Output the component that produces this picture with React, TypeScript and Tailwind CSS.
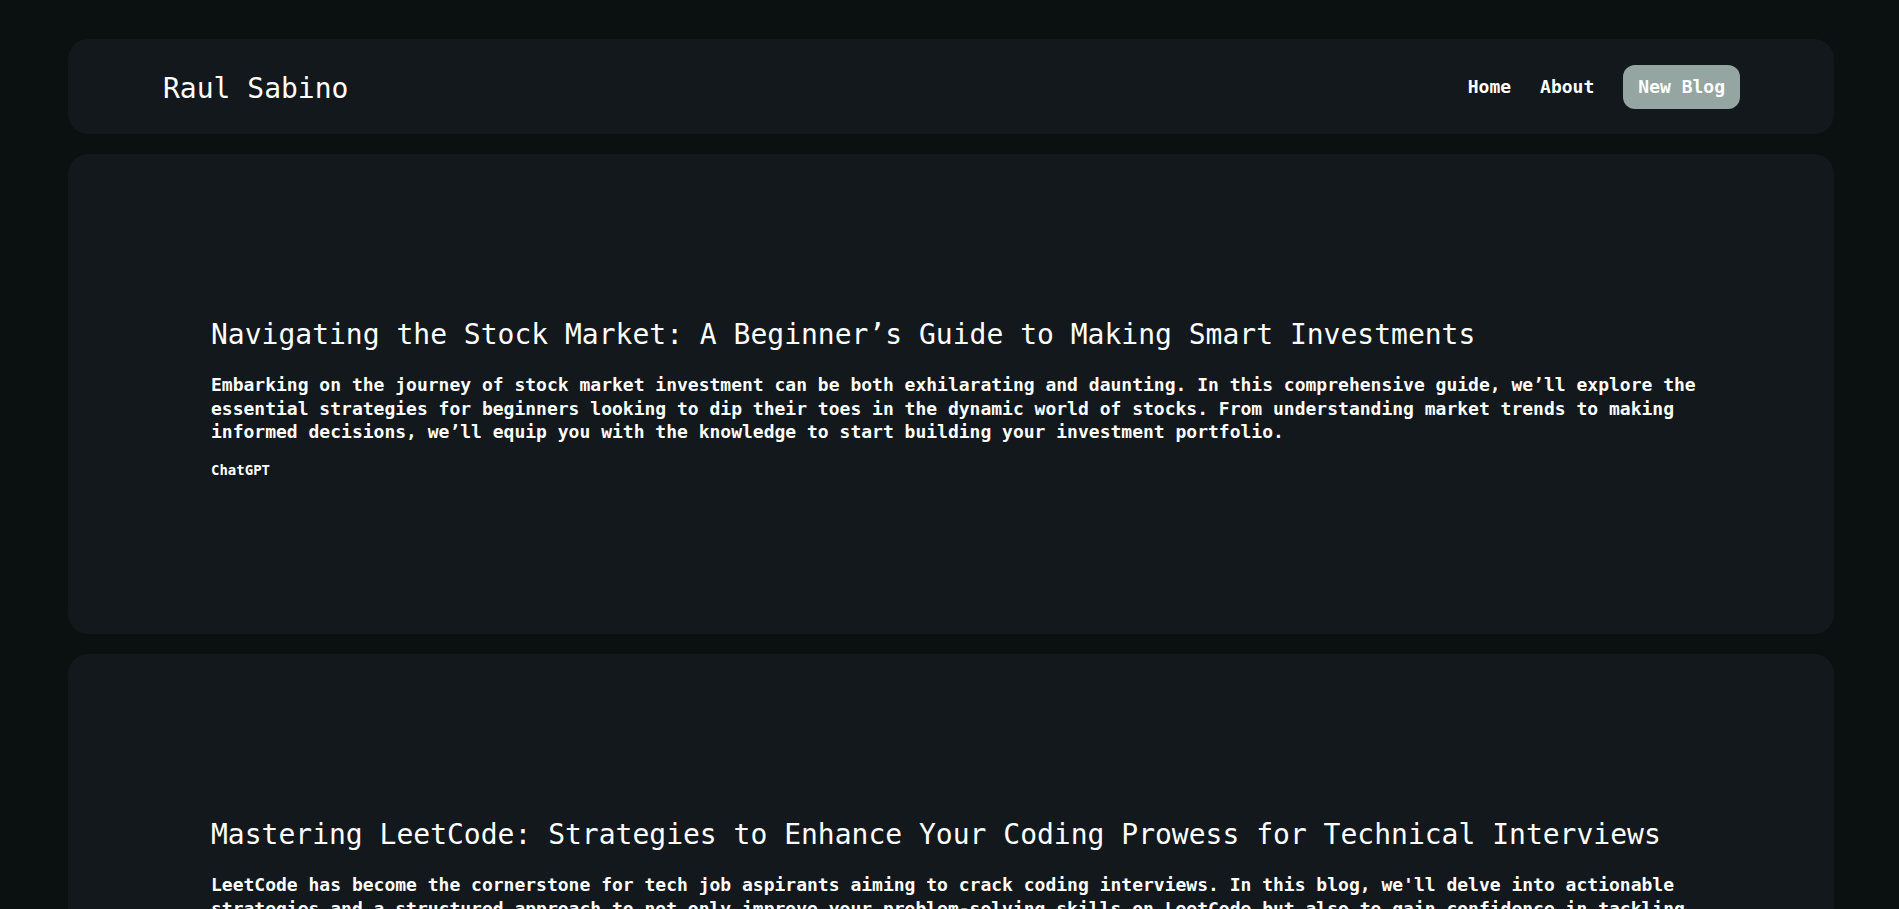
const posts = [
  {
    title: "Navigating the Stock Market: A Beginner’s Guide to Making Smart Investments",
    body: "Embarking on the journey of stock market investment can be both exhilarating and daunting. In this comprehensive guide, we’ll explore the essential strategies for beginners looking to dip their toes in the dynamic world of stocks. From understanding market trends to making informed decisions, we’ll equip you with the knowledge to start building your investment portfolio.",
    author: "ChatGPT",
  },
  {
    title: "Mastering LeetCode: Strategies to Enhance Your Coding Prowess for Technical Interviews",
    body: "LeetCode has become the cornerstone for tech job aspirants aiming to crack coding interviews. In this blog, we'll delve into actionable strategies and a structured approach to not only improve your problem-solving skills on LeetCode but also to gain confidence in tackling technical interviews at top companies.",
    author: "ChatGPT",
  },
];

export default function App() {
  return (
    <div
      className="min-h-screen bg-[#0b1011] text-white pt-[39px] pb-10"
      style={{ fontFamily: "'DejaVu Sans Mono', 'Liberation Mono', monospace" }}
    >
      <div className="ml-[68px] mr-[65px] flex flex-col gap-[20px]">
        <header className="h-[95px] bg-[#12181c] rounded-[20px] flex items-center justify-between pl-[95px] pr-[94px]">
          <h1 className="text-[28px] pt-[4px]">Raul Sabino</h1>
          <nav className="flex items-center gap-[29px] text-[18px] font-bold">
            <a href="#" className="text-white">Home</a>
            <a href="#" className="text-white">About</a>
            <button className="h-[44px] px-[15px] rounded-[12px] bg-[#95a5a2] text-white font-bold">
              New Blog
            </button>
          </nav>
        </header>

        {posts.map((post) => (
          <article
            key={post.title}
            className="h-[480px] bg-[#12181c] rounded-[20px] flex flex-col justify-center pl-[143px] pr-[130px] pt-[10px]"
          >
            <h2 className="text-[28px] leading-[34px]">{post.title}</h2>
            <p className="mt-[21px] text-[18px] leading-[23.5px] font-bold">{post.body}</p>
            <span className="mt-[16px] text-[14px] leading-[20px] font-bold">{post.author}</span>
          </article>
        ))}
      </div>
    </div>
  );
}
